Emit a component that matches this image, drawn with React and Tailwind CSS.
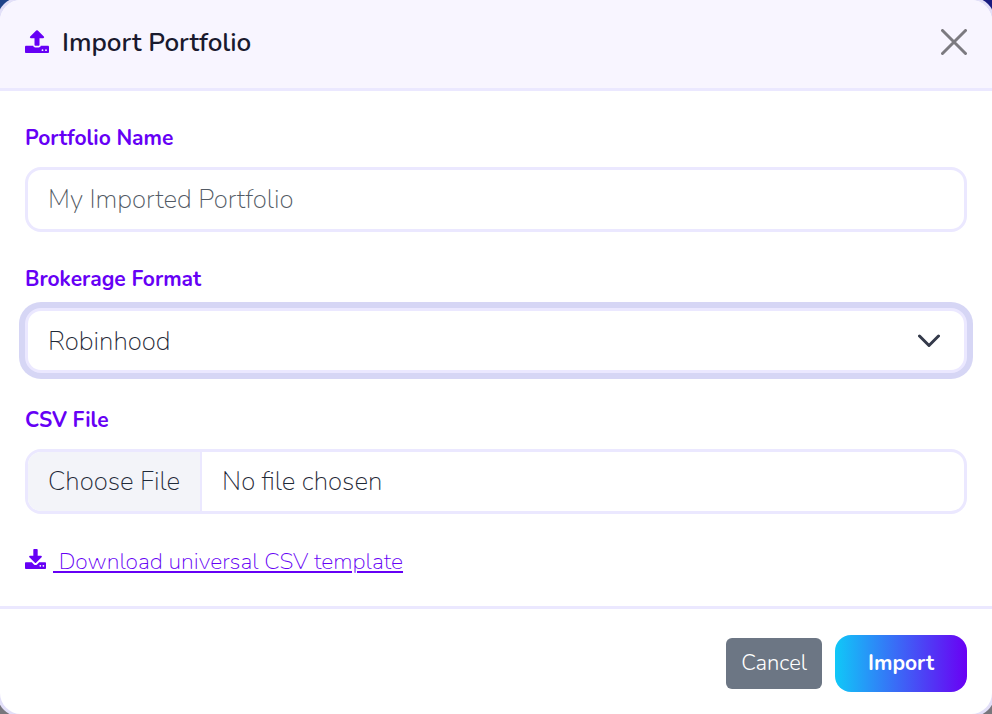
import { useState } from "react";

const FORMATS = ["Robinhood", "Fidelity", "Charles Schwab", "Universal CSV"];

const labelClass = "block mb-3.5 text-[21px] leading-[30px] font-bold text-[#6600f5]";
const fieldClass =
  "block w-full h-[65px] rounded-2xl border-[3px] border-[#ebe8ff] bg-white text-[26px] font-extralight text-[#1f2937] outline-none";

const UploadIcon = () => (
  <svg width="24" height="24" viewBox="0 0 24 24" fill="currentColor" className="mb-0.5" aria-hidden="true">
    <path d="M11.2.5a1.2 1.2 0 0 1 1.6 0L18.8 6.6c.7.7.2 1.6-.6 1.6h-3.7v6.5c0 .7-.5 1.1-1.1 1.1h-2.8c-.6 0-1.1-.4-1.1-1.1V8.2H5.8c-.8 0-1.3-.9-.6-1.6Z" />
    <path
      fillRule="evenodd"
      d="M1.2 15.8H8.2c.3 1 1.1 1.6 2.2 1.6h3.2c1.1 0 1.9-.6 2.2-1.6h7c.7 0 1.2.5 1.2 1.1v5.1c0 .6-.5 1.1-1.2 1.1H1.2C.5 23.1 0 22.6 0 22v-5.1c0-.6.5-1.1 1.2-1.1ZM17.5 19.3a.9.9 0 1 0 0 1.8.9.9 0 0 0 0-1.8ZM21 19.3a.9.9 0 1 0 0 1.8.9.9 0 0 0 0-1.8Z"
    />
  </svg>
);

const DownloadIcon = () => (
  <svg width="21" height="21" viewBox="0 0 24 24" fill="currentColor" className="mb-1.5" aria-hidden="true">
    <path d="M10.6 0h2.8c.6 0 1.1.5 1.1 1.1v6.7h3.8c.9 0 1.3 1 .7 1.6l-6.3 6.3a1 1 0 0 1-1.4 0L5 9.4c-.6-.6-.2-1.6.7-1.6h3.8V1.1C9.5.5 10 0 10.6 0Z" />
    <path
      fillRule="evenodd"
      d="M1.2 15.2H7.8l2.4 2.4c1 1 2.6 1 3.6 0l2.4-2.4h6.6c.7 0 1.2.5 1.2 1.1v5.5c0 .6-.5 1.1-1.2 1.1H1.2C.5 22.9 0 22.4 0 21.8v-5.5c0-.6.5-1.1 1.2-1.1ZM17.5 18.2a1 1 0 1 0 0 2 1 1 0 0 0 0-2ZM21 18.2a1 1 0 1 0 0 2 1 1 0 0 0 0-2Z"
    />
  </svg>
);

const Field = ({ id, label, children }) => (
  <div>
    <label htmlFor={id} className={labelClass}>
      {label}
    </label>
    {children}
  </div>
);

const ImportPortfolioModal = () => {
  const [name, setName] = useState("");
  const [format, setFormat] = useState("Robinhood");

  return (
    <form
      role="dialog"
      aria-labelledby="import-title"
      onSubmit={(e) => e.preventDefault()}
      className="flex-1 flex flex-col rounded-[21px] ring-[3px] ring-[#e2dff8] bg-white overflow-hidden"
    >
      <header className="flex items-start justify-between px-[25px] pt-[25px] pb-[27px] bg-[#f8f5ff] border-b-[3px] border-[#ebe8ff]">
        <h1
          id="import-title"
          className="flex items-center gap-[13px] text-[26px] leading-9 font-semibold text-[#1a1a2e]"
        >
          <span className="text-[#6600f5]">
            <UploadIcon />
          </span>
          Import Portfolio
        </h1>
        <button type="button" aria-label="Close" className="mt-1 text-[#7c7a80]">
          <svg
            width="26"
            height="26"
            viewBox="0 0 26 26"
            fill="none"
            stroke="currentColor"
            strokeWidth="3"
            strokeLinecap="round"
          >
            <path d="M1.5 1.5 24.5 24.5M24.5 1.5 1.5 24.5" />
          </svg>
        </button>
      </header>

      <div className="flex-1 flex flex-col gap-8 px-[25px] pt-8 pb-[26px]">
        <Field id="portfolio-name" label="Portfolio Name">
          <input
            id="portfolio-name"
            type="text"
            value={name}
            onChange={(e) => setName(e.target.value)}
            placeholder="My Imported Portfolio"
            className={`${fieldClass} px-5 placeholder:text-[#525a64]`}
          />
        </Field>

        <Field id="brokerage-format" label="Brokerage Format">
          <div className="relative">
            <select
              id="brokerage-format"
              value={format}
              onChange={(e) => setFormat(e.target.value)}
              className={`${fieldClass} px-5 pt-0.5 appearance-none ring-[6px] ring-[#d6d6f5]`}
            >
              {FORMATS.map((item) => (
                <option key={item}>{item}</option>
              ))}
            </select>
            <svg
              className="absolute right-[27px] top-1/2 -translate-y-1/2 pointer-events-none"
              width="22"
              height="14"
              viewBox="0 0 22 14"
              fill="none"
              stroke="#343a4a"
              strokeWidth="3"
              strokeLinecap="round"
              strokeLinejoin="round"
            >
              <path d="M1.5 2 11 11.5 20.5 2" />
            </svg>
          </div>
        </Field>

        <Field id="csv-file" label="CSV File">
          <input
            id="csv-file"
            type="file"
            accept=".csv"
            className={`${fieldClass} leading-[59px] overflow-hidden file:h-[59px] file:px-5 file:mr-5 file:border-r-2 file:border-solid file:border-[#ebe8ff] file:bg-[#f3f4f9]`}
          />
        </Field>

        <a
          href="#template"
          className="self-start flex items-center gap-[7px] text-[23px] leading-8 font-extralight text-[#6600f5]"
        >
          <DownloadIcon />
          <span className="underline decoration-2 underline-offset-2 whitespace-pre"> Download universal CSV template</span>
        </a>
      </div>

      <footer className="flex items-center justify-end gap-[13px] px-[25px] pt-[26px] pb-[22px] border-t-[3px] border-[#ebe8ff]">
        <button
          type="button"
          className="h-[51px] px-[15px] rounded-md bg-[#6c7684] text-[22px] font-light text-white"
        >
          Cancel
        </button>
        <button
          type="submit"
          className="h-[57px] px-[33px] rounded-2xl bg-linear-to-r/srgb from-[#10c8f8] to-[#6a00f4] text-[21px] font-bold text-white"
        >
          Import
        </button>
      </footer>
    </form>
  );
};

const App = () => (
  <div className="min-h-screen flex overflow-hidden bg-[linear-gradient(to_bottom,transparent_50%,#77767c_50%),linear-gradient(to_right,#1f4489,#191c80)] font-[Nunito,Lato,sans-serif]">
    <ImportPortfolioModal />
  </div>
);

export default App;
